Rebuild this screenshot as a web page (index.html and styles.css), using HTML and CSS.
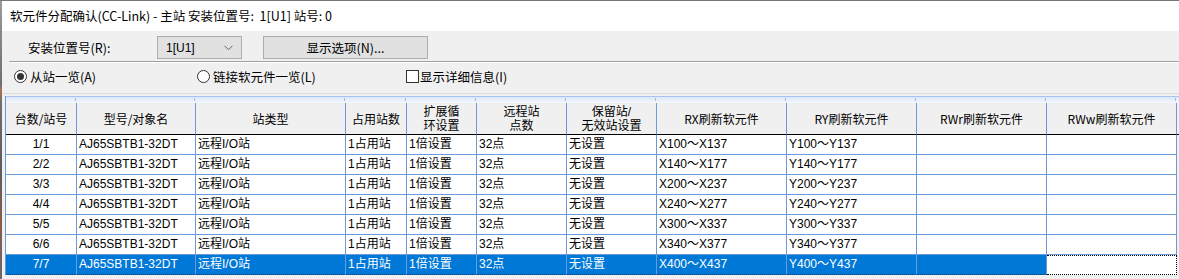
FILE: index.html
```html
<!DOCTYPE html>
<html lang="zh-CN">
<head>
<meta charset="utf-8">
<link rel="stylesheet" href="styles.css">
</head>
<body>
<div class="win">
  <div class="edge"></div>
  <div class="main">
    <div class="titlebar">软元件分配确认(CC-Link) - 主站 安装位置号:&nbsp; 1[U1] 站号: 0</div>
    <div class="panel">
      <div class="row1">
        <span class="lbl">安装位置号(R):</span>
        <div class="combo"><span>1[U1]</span>
          <svg width="9" height="6" viewBox="0 0 9 6"><path d="M0.5 0.8 L4.5 4.8 L8.5 0.8" fill="none" stroke="#606060" stroke-width="1"/></svg>
        </div>
        <div class="btn">显示选项(N)...</div>
      </div>
      <div class="sep"></div>
      <div class="row2">
        <label class="opt o1"><span class="radio on"></span>从站一览(A)</label>
        <label class="opt o2"><span class="radio"></span>链接软元件一览(L)</label>
        <label class="opt o3"><span class="check"></span>显示详细信息(I)</label>
      </div>
      <div class="sep2"></div>
      <div class="grid">
        <div class="strip"></div><div class="strip"></div><div class="strip"></div><div class="strip"></div><div class="strip"></div><div class="strip"></div><div class="strip"></div><div class="strip"></div><div class="strip"></div><div class="strip"></div><div class="strip"></div><div class="strip fill"></div>

        <div class="h">台数/站号</div>
        <div class="h">型号/对象名</div>
        <div class="h">站类型</div>
        <div class="h">占用站数</div>
        <div class="h two"><span>扩展循</span><span>环设置</span></div>
        <div class="h two"><span>远程站</span><span>点数</span></div>
        <div class="h two"><span>保留站/</span><span>无效站设置</span></div>
        <div class="h">RX刷新软元件</div>
        <div class="h">RY刷新软元件</div>
        <div class="h">RWr刷新软元件</div>
        <div class="h">RWw刷新软元件</div>
        <div class="h fill"></div>

        <div class="c ctr">1/1</div><div class="c">AJ65SBTB1-32DT</div><div class="c">远程I/O站</div><div class="c">1占用站</div><div class="c">1倍设置</div><div class="c">32点</div><div class="c">无设置</div><div class="c">X100～X137</div><div class="c">Y100～Y137</div><div class="c"></div><div class="c"></div><div class="c fill"></div>
        <div class="c ctr">2/2</div><div class="c">AJ65SBTB1-32DT</div><div class="c">远程I/O站</div><div class="c">1占用站</div><div class="c">1倍设置</div><div class="c">32点</div><div class="c">无设置</div><div class="c">X140～X177</div><div class="c">Y140～Y177</div><div class="c"></div><div class="c"></div><div class="c fill"></div>
        <div class="c ctr">3/3</div><div class="c">AJ65SBTB1-32DT</div><div class="c">远程I/O站</div><div class="c">1占用站</div><div class="c">1倍设置</div><div class="c">32点</div><div class="c">无设置</div><div class="c">X200～X237</div><div class="c">Y200～Y237</div><div class="c"></div><div class="c"></div><div class="c fill"></div>
        <div class="c ctr">4/4</div><div class="c">AJ65SBTB1-32DT</div><div class="c">远程I/O站</div><div class="c">1占用站</div><div class="c">1倍设置</div><div class="c">32点</div><div class="c">无设置</div><div class="c">X240～X277</div><div class="c">Y240～Y277</div><div class="c"></div><div class="c"></div><div class="c fill"></div>
        <div class="c ctr">5/5</div><div class="c">AJ65SBTB1-32DT</div><div class="c">远程I/O站</div><div class="c">1占用站</div><div class="c">1倍设置</div><div class="c">32点</div><div class="c">无设置</div><div class="c">X300～X337</div><div class="c">Y300～Y337</div><div class="c"></div><div class="c"></div><div class="c fill"></div>
        <div class="c ctr">6/6</div><div class="c">AJ65SBTB1-32DT</div><div class="c">远程I/O站</div><div class="c">1占用站</div><div class="c">1倍设置</div><div class="c">32点</div><div class="c">无设置</div><div class="c">X340～X377</div><div class="c">Y340～Y377</div><div class="c"></div><div class="c"></div><div class="c fill"></div>
        <div class="c ctr sel">7/7</div><div class="c sel">AJ65SBTB1-32DT</div><div class="c sel">远程I/O站</div><div class="c sel">1占用站</div><div class="c sel">1倍设置</div><div class="c sel">32点</div><div class="c sel">无设置</div><div class="c sel">X400～X437</div><div class="c sel">Y400～Y437</div><div class="c sel"></div><div class="c focus"></div><div class="c fill"></div>
      </div>
    </div>
  </div>
</div>
</body>
</html>
```

FILE: styles.css
```css
* { box-sizing: border-box; }
html, body { margin: 0; padding: 0; }
body {
  width: 1179px;
  height: 279px;
  overflow: hidden;
  background: #f0f0f0;
  font-family: "Noto Sans CJK SC", "Noto Sans", sans-serif;
  font-size: 12px;
  color: #000;
}
.win {
  display: flex;
  width: 1179px;
  height: 279px;
  border-top: 1px solid #767676;
}
.edge {
  width: 2px;
  flex: none;
  background: linear-gradient(to bottom, #9a9a9a 0, #6f6f6f 30%, #b07050 32%, #6f6f6f 36%, #5d5d5d 60%, #8a5a4a 80%, #6a6a6a 100%);
}
.main {
  flex: 1;
  display: flex;
  flex-direction: column;
}
.titlebar {
  height: 30px;
  background: #fff;
  padding-left: 8px;
  line-height: 30px;
  font-size: 12.5px;
  white-space: nowrap;
}
.panel {
  flex: 1;
  background: #f0f0f0;
  display: flex;
  flex-direction: column;
}
.row1 {
  margin-top: 5px;
  height: 23px;
  display: flex;
  align-items: center;
  padding-left: 26px;
}
.lbl { width: 129px; flex: none; font-size: 12.5px; }
.combo {
  width: 85px;
  height: 23px;
  background: #e1e1e1;
  border: 1px solid #adadad;
  display: flex;
  align-items: center;
  justify-content: space-between;
  padding: 0 8px 0 8px;
  font-family: "Liberation Sans", "Noto Sans CJK SC", sans-serif;
}
.combo svg { margin-top: 1px; }
.btn {
  margin-left: 21px;
  width: 165px;
  height: 23px;
  background: #e1e1e1;
  border: 1px solid #adadad;
  display: flex;
  align-items: center;
  justify-content: center;
  font-size: 12.5px;
}
.sep {
  margin-top: 2px;
  margin-left: 7px;
  height: 2px;
  border-top: 1px solid #a0a0a0;
  border-bottom: 1px solid #fff;
}
.row2 {
  height: 26px;
  display: flex;
  align-items: center;
  padding-left: 12px;
  font-size: 12.5px;
}
.opt {
  display: flex;
  align-items: center;
  flex: none;
  white-space: nowrap;
}
.o1 { width: 183px; }
.o2 { width: 209px; }
.radio {
  width: 13px;
  height: 13px;
  border: 1px solid #333;
  border-radius: 50%;
  background: #fff;
  margin-right: 3px;
  display: flex;
  align-items: center;
  justify-content: center;
}
.radio.on::before {
  content: "";
  width: 7px;
  height: 7px;
  border-radius: 50%;
  background: #333;
}
.check {
  width: 13px;
  height: 13px;
  border: 1px solid #333;
  background: #fff;
  margin-right: 1px;
}
.sep2 {
  margin-top: 4px;
  height: 1px;
  background: #dcdcdc;
}
.grid {
  margin-top: 2px;
  margin-left: 3px;
  display: grid;
  grid-template-columns: 71px 119px 150px 61px 70px 90px 90px 130px 130px 130px 130px 1fr;
  grid-auto-rows: auto;
  border-left: 1px solid #6a9ad8;
  font-family: "Liberation Sans", "Noto Sans CJK SC", sans-serif;
  font-size: 12px;
}
.strip {
  height: 7px;
  border-top: 1px solid #a9c4ec;
  background:
    linear-gradient(#9fbde8, #9fbde8) right 1px top 1px / 1px 3px no-repeat,
    linear-gradient(to bottom, #dbe7f8, #f4f8fd);
}
.strip.fill { background: linear-gradient(to bottom, #dbe7f8, #f4f8fd); }
.h {
  height: 32px;
  background: #f0f0f0;
  border-right: 1px solid #6a9ad8;
  border-bottom: 1px solid #000;
  display: flex;
  align-items: center;
  justify-content: center;
  text-align: center;
  white-space: nowrap;
  font-family: "Noto Sans CJK SC", sans-serif;
}
.h.two {
  flex-direction: column;
  font-family: "Liberation Sans", "Noto Sans CJK SC", sans-serif;
}
.h.two span {
  display: block;
  height: 14px;
  line-height: 14px;
}
.h.fill { border-right: none; }
.c {
  height: 20px;
  background: #fff;
  border-right: 1px solid #6a9ad8;
  border-bottom: 1px solid #6a9ad8;
  padding-left: 2px;
  line-height: 19px;
  white-space: nowrap;
  overflow: hidden;
}
.c.ctr { text-align: center; padding-left: 0; }
.c.fill { background: #f0f0f0; border: none; }
.c.sel {
  background: #0078d7;
  color: #fff;
  border-right-color: #6a9ad8;
  border-bottom: 1px dotted #1b3a66;
}
.c.focus {
  background: #fff;
  border: 1px dotted #000;
  border-left: none;
}
```
